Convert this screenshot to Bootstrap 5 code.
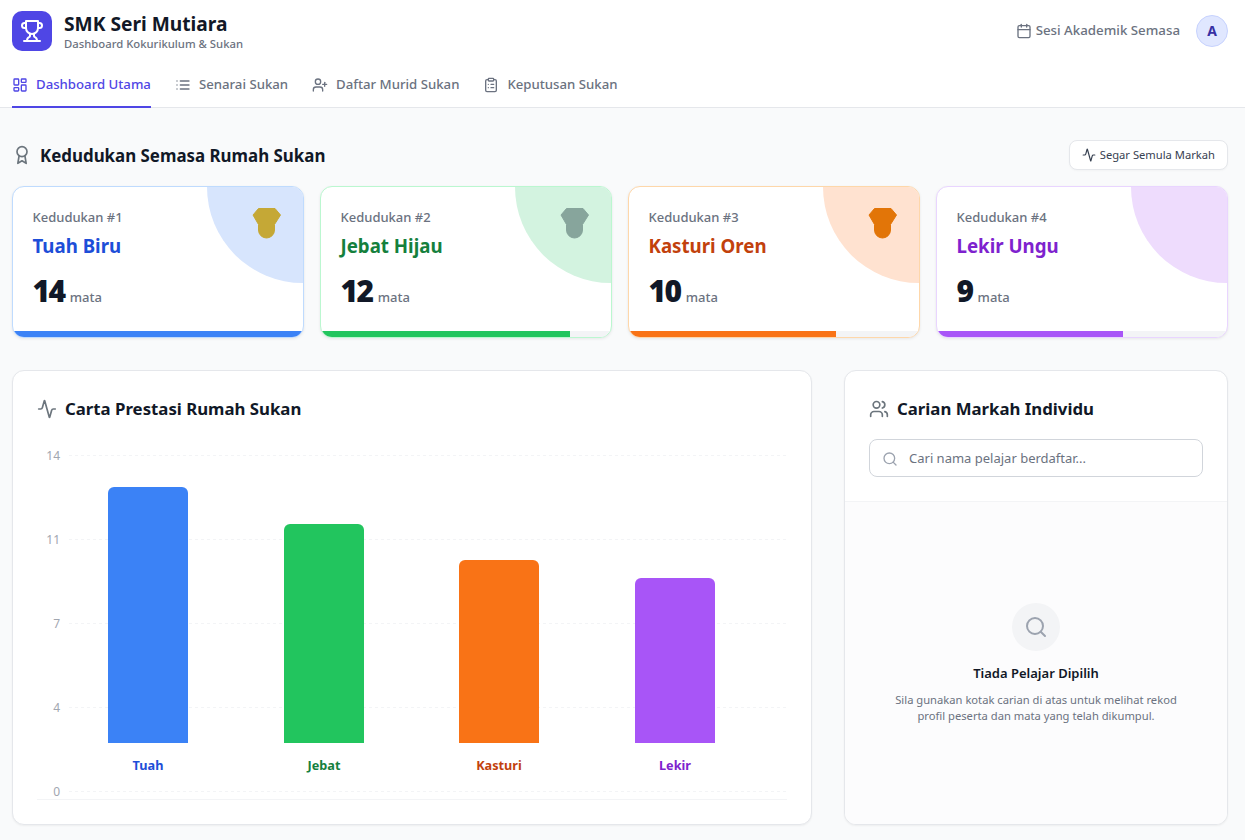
<!DOCTYPE html>
<html lang="ms">
<head>
<meta charset="utf-8">
<title>SMK Seri Mutiara</title>
<link href="https://cdn.jsdelivr.net/npm/bootstrap@5.3.0/dist/css/bootstrap.min.css" rel="stylesheet">
<style>
html,body{height:840px;overflow:hidden}
body{background:#f9fafb;font-family:"Noto Sans","Liberation Sans",sans-serif;color:#111827}
svg.ico{fill:none;stroke:currentColor;stroke-width:2;stroke-linecap:round;stroke-linejoin:round;flex:none}
.top-head{background:#fff;border-bottom:1px solid #e5e7eb;padding:0 17px 0 12px;height:108px}
.head-row{height:61px}
.logo-box{width:40px;height:40px;border-radius:10px;background:#4f46e5;color:#fff}
.brand-name{font-size:19.2px;font-weight:700;line-height:24px;padding-top:2px;box-sizing:content-box}
.brand-sub{font-size:11.3px;font-weight:500;color:#6b7280;line-height:14px;margin-top:1px}
.sesi{font-size:13.3px;font-weight:500;color:#6b7280}
.avatar{width:32px;height:32px;border-radius:50%;background:#e0e7ff;border:1px solid #c7d2fe;color:#3730a3;font-size:14px;font-weight:700}
.tabs{gap:24px;height:47px}
.tab-item{font-size:13.2px;font-weight:500;color:#6b7280;border-bottom:2px solid transparent;text-decoration:none;padding-top:3px}
.tab-item.on{color:#4f46e5;border-bottom-color:#4f46e5}
.page{padding:32px 17px 0 12px}
.sec-title{font-size:16.9px;font-weight:700;line-height:24px;padding-top:2px}
.refresh{background:#fff;border:1px solid #e5e7eb;border-radius:8px;font-size:11.2px;font-weight:400;color:#374151;height:30px;padding:0 12px;box-shadow:0 1px 2px rgba(0,0,0,.03)}
.rank-grid{display:grid;grid-template-columns:repeat(4,1fr);gap:16px;margin-top:16px}
.rank-box{position:relative;height:152px;background:#fff;border:1px solid;border-radius:12px;overflow:hidden;padding:20px 20px 20px 19.5px;box-shadow:0 1px 3px rgba(0,0,0,.08)}
.blob{position:absolute;top:-96px;right:-96px;width:192px;height:192px;border-radius:50%}
.medal{position:absolute;top:20px;right:21px}
.rank-lbl{font-size:13px;font-weight:500;color:#6b7280;line-height:20px}
.rank-name{font-size:18.7px;font-weight:700;line-height:28px;margin-top:5px}
.rank-num{font-size:30px;font-weight:900;line-height:36px;letter-spacing:-1.5px;font-family:"Noto Sans",sans-serif}
.rank-unit{font-size:13px;font-weight:500;color:#6b7280;margin-left:5px}
.rank-score{margin-top:13px}
.track{position:absolute;left:0;right:0;bottom:0;height:6px;background:#f3f4f6}
.fill{height:100%}
.lower{display:grid;grid-template-columns:800px 384px;gap:32px;margin-top:32px}
.panel{background:#fff;border:1px solid #e5e7eb;border-radius:12px;height:455px;overflow:hidden;box-shadow:0 1px 2px rgba(0,0,0,.05)}
.panel-title{font-size:16.8px;font-weight:700;line-height:24px}
.chart-wrap{padding:26px 24px 0}
.chart-svg{display:block;margin-top:24px}
.chart-svg text{font-family:"Noto Sans",sans-serif}
.search-area{padding:26px 24px 24px;border-bottom:1px solid #f3f4f6}
.search-field{height:38px;border:1px solid #d1d5db;border-radius:8px;padding:1px 12px 0;margin-top:18px;gap:11px;font-size:13px;color:#6b7280}
.empty-area{background:#fcfcfd;height:324px;padding:101px 40px 0}
.empty-dot{width:48px;height:48px;border-radius:50%;background:#f3f4f6;color:#9ca3af}
.empty-h{font-size:13px;font-weight:600;line-height:20px;margin-top:12px}
.empty-p{font-size:11.2px;line-height:16px;color:#6b7280;margin-top:9px}
</style>
</head>
<body>
<header class="top-head">
  <div class="head-row d-flex align-items-center justify-content-between">
    <div class="d-flex align-items-center gap-2">
      <div class="logo-box d-flex align-items-center justify-content-center me-1">
        <svg class="ico" width="24" height="24" viewBox="0 0 24 24"><path d="M6 9H4.5a2.5 2.5 0 0 1 0-5H6"/><path d="M18 9h1.5a2.5 2.5 0 0 0 0-5H18"/><path d="M4 22h16"/><path d="M10 14.66V17c0 .55-.47.98-.97 1.21C7.85 18.75 7 20.24 7 22"/><path d="M14 14.66V17c0 .55.47.98.97 1.21C16.15 18.75 17 20.24 17 22"/><path d="M18 2H6v7a6 6 0 0 0 12 0V2Z"/></svg>
      </div>
      <div>
        <div class="brand-name">SMK Seri Mutiara</div>
        <div class="brand-sub">Dashboard Kokurikulum &amp; Sukan</div>
      </div>
    </div>
    <div class="d-flex align-items-center" style="gap:16px">
      <div class="sesi d-flex align-items-center gap-1">
        <svg class="ico" width="16" height="16" viewBox="0 0 24 24"><path d="M8 2v4"/><path d="M16 2v4"/><rect x="3" y="4" width="18" height="18" rx="2"/><path d="M3 10h18"/></svg>
        Sesi Akademik Semasa
      </div>
      <div class="avatar d-flex align-items-center justify-content-center">A</div>
    </div>
  </div>
  <nav class="tabs d-flex">
    <a class="tab-item on d-flex align-items-center gap-2" href="#">
      <svg class="ico" width="16" height="16" viewBox="0 0 24 24"><rect x="3" y="3" width="7" height="9" rx="1"/><rect x="14" y="3" width="7" height="5" rx="1"/><rect x="14" y="12" width="7" height="9" rx="1"/><rect x="3" y="16" width="7" height="5" rx="1"/></svg>
      Dashboard Utama</a>
    <a class="tab-item d-flex align-items-center gap-2" href="#">
      <svg class="ico" width="16" height="16" viewBox="0 0 24 24"><path d="M3 12h.01"/><path d="M3 18h.01"/><path d="M3 6h.01"/><path d="M8 12h13"/><path d="M8 18h13"/><path d="M8 6h13"/></svg>
      Senarai Sukan</a>
    <a class="tab-item d-flex align-items-center gap-2" href="#">
      <svg class="ico" width="16" height="16" viewBox="0 0 24 24"><path d="M16 21v-2a4 4 0 0 0-4-4H6a4 4 0 0 0-4 4v2"/><circle cx="9" cy="7" r="4"/><path d="M19 8v6"/><path d="M22 11h-6"/></svg>
      Daftar Murid Sukan</a>
    <a class="tab-item d-flex align-items-center gap-2" href="#">
      <svg class="ico" width="16" height="16" viewBox="0 0 24 24"><rect x="8" y="2" width="8" height="4" rx="1"/><path d="M16 4h2a2 2 0 0 1 2 2v14a2 2 0 0 1-2 2H6a2 2 0 0 1-2-2V6a2 2 0 0 1 2-2h2"/><path d="M12 11h4"/><path d="M12 16h4"/><path d="M8 11h.01"/><path d="M8 16h.01"/></svg>
      Keputusan Sukan</a>
  </nav>
</header>

<main class="page">
  <div class="d-flex align-items-center justify-content-between">
    <div class="d-flex align-items-center gap-2">
      <svg class="ico text-secondary" width="20" height="20" viewBox="0 0 24 24"><circle cx="12" cy="8" r="6"/><path d="M15.477 12.89 17 22l-5-3-5 3 1.523-9.11"/></svg>
      <div class="sec-title">Kedudukan Semasa Rumah Sukan</div>
    </div>
    <button type="button" class="refresh d-flex align-items-center gap-1">
      <svg class="ico" width="14" height="14" viewBox="0 0 24 24"><path d="M22 12h-2.48a2 2 0 0 0-1.93 1.46l-2.35 8.36a.25.25 0 0 1-.48 0L9.24 2.18a.25.25 0 0 0-.48 0l-2.35 8.36A2 2 0 0 1 4.49 12H2"/></svg>
      Segar Semula Markah
    </button>
  </div>

  <div class="rank-grid">
    <div class="rank-box" style="border-color:#bfdbfe">
      <div class="blob" style="background:#d7e5fd"></div>
      <svg class="medal" width="30" height="32" viewBox="0 0 30 32"><path d="M6.5 1.5h16.5l5.5 6.5-6 9.5V23a8 8 0 0 1-16 0v-5.5L1 8Z" fill="#c5a836" stroke="#c5a836" stroke-linejoin="round"/></svg>
      <div class="rank-lbl">Kedudukan #1</div>
      <div class="rank-name" style="color:#1d4ed8">Tuah Biru</div>
      <div class="rank-score d-flex align-items-baseline"><span class="rank-num">14</span><span class="rank-unit">mata</span></div>
      <div class="track"><div class="fill" style="width:100%;background:#3b82f6"></div></div>
    </div>
    <div class="rank-box" style="border-color:#bbf7d0">
      <div class="blob" style="background:#d3f3e0"></div>
      <svg class="medal" width="30" height="32" viewBox="0 0 30 32"><path d="M6.5 1.5h16.5l5.5 6.5-6 9.5V23a8 8 0 0 1-16 0v-5.5L1 8Z" fill="#87a59c" stroke="#87a59c" stroke-linejoin="round"/></svg>
      <div class="rank-lbl">Kedudukan #2</div>
      <div class="rank-name" style="color:#15803d">Jebat Hijau</div>
      <div class="rank-score d-flex align-items-baseline"><span class="rank-num">12</span><span class="rank-unit">mata</span></div>
      <div class="track"><div class="fill" style="width:85.7%;background:#22c55e"></div></div>
    </div>
    <div class="rank-box" style="border-color:#fed7aa">
      <div class="blob" style="background:#ffe2d0"></div>
      <svg class="medal" width="30" height="32" viewBox="0 0 30 32"><path d="M6.5 1.5h16.5l5.5 6.5-6 9.5V23a8 8 0 0 1-16 0v-5.5L1 8Z" fill="#e27508" stroke="#e27508" stroke-linejoin="round"/></svg>
      <div class="rank-lbl">Kedudukan #3</div>
      <div class="rank-name" style="color:#c2410c">Kasturi Oren</div>
      <div class="rank-score d-flex align-items-baseline"><span class="rank-num">10</span><span class="rank-unit">mata</span></div>
      <div class="track"><div class="fill" style="width:71.4%;background:#f97316"></div></div>
    </div>
    <div class="rank-box" style="border-color:#e9d5ff">
      <div class="blob" style="background:#eedcfd"></div>
      <div class="rank-lbl">Kedudukan #4</div>
      <div class="rank-name" style="color:#7e22ce">Lekir Ungu</div>
      <div class="rank-score d-flex align-items-baseline"><span class="rank-num">9</span><span class="rank-unit">mata</span></div>
      <div class="track"><div class="fill" style="width:64.3%;background:#a855f7"></div></div>
    </div>
  </div>

  <div class="lower">
    <section class="panel chart-wrap">
      <div class="d-flex align-items-center gap-2">
        <svg class="ico text-secondary" width="20" height="20" viewBox="0 0 24 24"><path d="M22 12h-2.48a2 2 0 0 0-1.93 1.46l-2.35 8.36a.25.25 0 0 1-.48 0L9.24 2.18a.25.25 0 0 0-.48 0l-2.35 8.36A2 2 0 0 1 4.49 12H2"/></svg>
        <div class="panel-title">Carta Prestasi Rumah Sukan</div>
      </div>
      <svg class="chart-svg" width="751" height="360" viewBox="37 445 751 360">
        <g stroke="#f3f4f6" stroke-dasharray="3 3">
          <path d="M69 455.5H787M69 539.5H787M69 623.5H787M69 707.5H787M69 791.5H787"/>
        </g>
        <path d="M37 799.5H787" stroke="#f3f4f6"/>
        <g fill="#a1a6b0" font-size="12" text-anchor="end">
          <text x="60" y="460">14</text><text x="60" y="544">11</text><text x="60" y="628">7</text><text x="60" y="712">4</text><text x="60" y="796">0</text>
        </g>
        <path d="M108 743V493a6 6 0 0 1 6-6h68a6 6 0 0 1 6 6V743Z" fill="#3b82f6"/>
        <path d="M284 743V530a6 6 0 0 1 6-6h68a6 6 0 0 1 6 6V743Z" fill="#22c55e"/>
        <path d="M459 743V566a6 6 0 0 1 6-6h68a6 6 0 0 1 6 6V743Z" fill="#f97316"/>
        <path d="M635 743V584a6 6 0 0 1 6-6h68a6 6 0 0 1 6 6V743Z" fill="#a855f7"/>
        <g font-size="12.7" font-weight="700" text-anchor="middle">
          <text x="148" y="770" fill="#1d4ed8">Tuah</text>
          <text x="324" y="770" fill="#15803d">Jebat</text>
          <text x="499" y="770" fill="#c2410c">Kasturi</text>
          <text x="675" y="770" fill="#7e22ce">Lekir</text>
        </g>
      </svg>
    </section>
    <section class="panel">
      <div class="search-area">
        <div class="d-flex align-items-center gap-2">
          <svg class="ico text-secondary" width="20" height="20" viewBox="0 0 24 24"><path d="M16 21v-2a4 4 0 0 0-4-4H6a4 4 0 0 0-4 4v2"/><circle cx="9" cy="7" r="4"/><path d="M22 21v-2a4 4 0 0 0-3-3.87"/><path d="M16 3.13a4 4 0 0 1 0 7.75"/></svg>
          <div class="panel-title">Carian Markah Individu</div>
        </div>
        <div class="search-field d-flex align-items-center">
          <svg class="ico" width="16" height="16" viewBox="0 0 24 24" style="color:#9ca3af"><circle cx="11" cy="11" r="8"/><path d="m21 21-4.3-4.3"/></svg>
          <span>Cari nama pelajar berdaftar...</span>
        </div>
      </div>
      <div class="empty-area text-center">
        <div class="empty-dot d-flex align-items-center justify-content-center mx-auto">
          <svg class="ico" width="24" height="24" viewBox="0 0 24 24"><circle cx="11" cy="11" r="8"/><path d="m21 21-4.3-4.3"/></svg>
        </div>
        <div class="empty-h">Tiada Pelajar Dipilih</div>
        <div class="empty-p">Sila gunakan kotak carian di atas untuk melihat rekod profil peserta dan mata yang telah dikumpul.</div>
      </div>
    </section>
  </div>
</main>
<script src="https://cdn.jsdelivr.net/npm/bootstrap@5.3.0/dist/js/bootstrap.bundle.min.js"></script>
</body>
</html>
